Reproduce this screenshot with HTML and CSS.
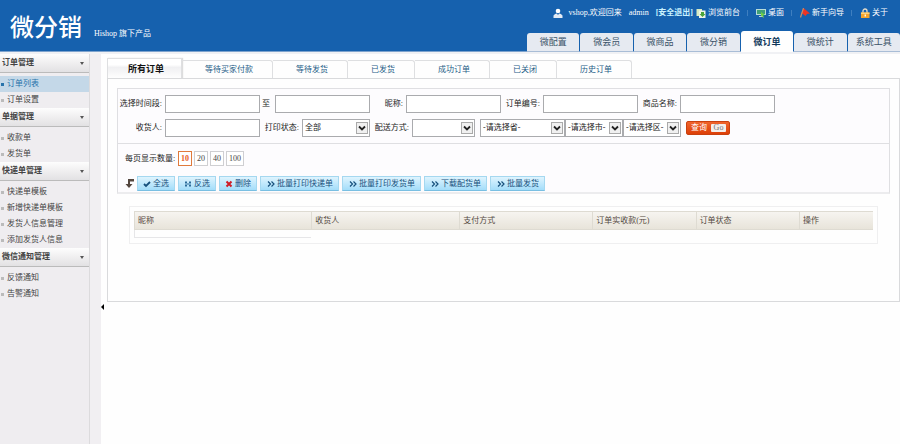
FILE: index.html
```html
<!DOCTYPE html>
<html lang="zh-CN">
<head>
    <meta charset="UTF-8">
    <meta name="viewport" content="width=device-width, initial-scale=1.0">
    <title>微分销</title>
    <link rel="stylesheet" href="styles.css">
</head>
<body>
    <header class="header">
        <div class="brand">
            <h1 class="logo">微分销</h1>
            <span class="slogan">Hishop 旗下产品</span>
        </div>
        <div class="header-right">
            <div class="toplinks">
                <svg class="icon user" viewBox="0 0 10 10"><circle cx="5" cy="3" r="2.3" fill="#fff"/><path d="M0.5 10V7.5Q2 5.8 3.8 5.6L5 7l1.2-1.4Q8 5.8 9.5 7.5V10z" fill="#e3ebf5"/></svg>
                <span class="welcome">vshop,欢迎回来</span>
                <span class="account">admin</span>
                <a class="logout" href="#">[安全退出]</a>
                <a href="#"><svg class="icon" viewBox="0 0 10 10"><path d="M0.5 1h5.5v7H0.5z" fill="#d8ecc4"/><path d="M3 2.5h6.5V10H3z" fill="#eef5e8"/><path d="M5 4h3v2h1.5L6.5 9 3.5 6H5z" fill="#4ba43a"/></svg>浏览前台</a>
                <i class="sep"></i>
                <a href="#"><svg class="icon" viewBox="0 0 10 10"><path d="M0 1h10v6H0z" fill="#b8dcd8"/><path d="M1 2h8v4H1z" fill="#3f9f78"/><path d="M3 8h4v1H3z" fill="#c4d2dc"/><path d="M5 4l4 3-2 .4 1 2-1 .4-1-2-1 1z" fill="#6fd044"/></svg>桌面</a>
                <i class="sep"></i>
                <a href="#"><svg class="icon" viewBox="0 0 10 10"><path d="M3.500 0L10 5.500 7 6 5.500 8 1.500 5z" fill="#ee3324"/><path d="M3.500 0L0.500 9.500" stroke="#c98d66" stroke-width="1.200"/></svg>新手向导</a>
                <i class="sep"></i>
                <a href="#"><svg class="icon" viewBox="0 0 10 10"><path d="M3 5V3a2 2 0 0 1 4 0v2" fill="none" stroke="#e4dccb" stroke-width="1.300"/><path d="M1 4.500h8.500V10H1z" fill="#f3a42c"/><path d="M1 4.500h8.500V6H1z" fill="#ffd176"/><path d="M4.600 6.500h1.300v2H4.600z" fill="#fff"/></svg>关于</a>
            </div>
            <nav class="mainnav">
                <a href="#">微配置</a>
                <a href="#">微会员</a>
                <a href="#">微商品</a>
                <a href="#">微分销</a>
                <a class="active" href="#">微订单</a>
                <a href="#">微统计</a>
                <a href="#">系统工具</a>
            </nav>
        </div>
    </header>

    <div class="page">
        <aside class="sidebar">
            <section>
                <h2>订单管理</h2>
                <ul>
                    <li class="current"><a href="#">订单列表</a></li>
                    <li><a href="#">订单设置</a></li>
                </ul>
            </section>
            <section>
                <h2>单据管理</h2>
                <ul>
                    <li><a href="#">收款单</a></li>
                    <li><a href="#">发货单</a></li>
                </ul>
            </section>
            <section>
                <h2>快递单管理</h2>
                <ul>
                    <li><a href="#">快递单模板</a></li>
                    <li><a href="#">新增快递单模板</a></li>
                    <li><a href="#">发货人信息管理</a></li>
                    <li><a href="#">添加发货人信息</a></li>
                </ul>
            </section>
            <section>
                <h2>微信通知管理</h2>
                <ul>
                    <li><a href="#">反馈通知</a></li>
                    <li><a href="#">告警通知</a></li>
                </ul>
            </section>
        </aside>
        <div class="gutter"></div>
        <div class="collapse">
            <button type="button" aria-label="收起菜单"></button>
        </div>

        <main class="content">
            <nav class="subtabs">
                <a class="active" href="#">所有订单</a>
                <a href="#">等待买家付款</a>
                <a href="#">等待发货</a>
                <a href="#">已发货</a>
                <a href="#">成功订单</a>
                <a href="#">已关闭</a>
                <a href="#">历史订单</a>
            </nav>
            <div class="panel">
                <form class="toolbox">
                    <div class="filters">
                        <div class="row">
                            <label class="first" for="start">选择时间段:</label>
                            <input id="start" type="text">
                            <label class="to" for="end">至</label>
                            <input id="end" type="text">
                            <label class="nick" for="nick">昵称:</label>
                            <input id="nick" type="text">
                            <label class="mid" for="order">订单编号:</label>
                            <input id="order" type="text">
                            <label class="mid" for="goods">商品名称:</label>
                            <input id="goods" type="text">
                        </div>
                        <div class="row">
                            <label class="first" for="receiver">收货人:</label>
                            <input id="receiver" type="text">
                            <label class="mid" for="print">打印状态:</label>
                            <select id="print" class="print"><option>全部</option></select>
                            <label class="mid" for="ship">配送方式:</label>
                            <select id="ship" class="ship"><option></option></select>
                            <div class="region">
                                <select class="province" aria-label="省"><option>-请选择省-</option></select>
                                <select class="city" aria-label="市"><option>-请选择市-</option></select>
                                <select class="city" aria-label="区"><option>-请选择区-</option></select>
                            </div>
                            <button class="search" type="button">查询<span>Go</span></button>
                        </div>
                    </div>
                    <div class="tools">
                        <div class="pagesize">
                            <span>每页显示数量:</span>
                            <a class="on" href="#">10</a>
                            <a href="#">20</a>
                            <a href="#">40</a>
                            <a href="#">100</a>
                        </div>
                        <div class="actions">
                            <svg class="turn" viewBox="0 0 9 9"><path d="M9 0v2.500H5V5h2.500L4 9 0.500 5H3V0z" fill="#54463f"/></svg>
                            <button type="button"><svg viewBox="0 0 8 8"><path d="M1 4l2 2 4-4" stroke="#17507c" stroke-width="1.800" fill="none"/></svg>全选</button>
                            <button type="button"><svg viewBox="0 0 8 8"><path d="M1 1.500h2v2h2v-2h2v2H5v1h2v2H5v-2H3v2H1v-2h2v-1H1z" fill="#2c6c9a"/></svg>反选</button>
                            <button type="button"><svg viewBox="0 0 8 8"><path d="M1.500 1.500l5 5m0-5l-5 5" stroke="#d01c26" stroke-width="2" fill="none"/></svg>删除</button>
                            <button class="wide" type="button"><svg viewBox="0 0 8 8"><path d="M1 1.500L3.500 4 1 6.500M4.500 1.500L7 4 4.500 6.500" stroke="#17507c" stroke-width="1.200" fill="none"/></svg>批量打印快递单</button>
                            <button class="wide" type="button"><svg viewBox="0 0 8 8"><path d="M1 1.500L3.500 4 1 6.500M4.500 1.500L7 4 4.500 6.500" stroke="#17507c" stroke-width="1.200" fill="none"/></svg>批量打印发货单</button>
                            <button class="wide" type="button"><svg viewBox="0 0 8 8"><path d="M1 1.500L3.500 4 1 6.500M4.500 1.500L7 4 4.500 6.500" stroke="#17507c" stroke-width="1.200" fill="none"/></svg>下载配货单</button>
                            <button class="wide" type="button"><svg viewBox="0 0 8 8"><path d="M1 1.500L3.500 4 1 6.500M4.500 1.500L7 4 4.500 6.500" stroke="#17507c" stroke-width="1.200" fill="none"/></svg>批量发货</button>
                        </div>
                    </div>
                </form>

                <div class="orders">
                    <table>
                        <thead>
                            <tr>
                                <th class="w24">昵称</th>
                                <th class="w20">收货人</th>
                                <th class="w18">支付方式</th>
                                <th class="w14">订单实收款(元)</th>
                                <th class="w14">订单状态</th>
                                <th>操作</th>
                            </tr>
                        </thead>
                        <tbody>
                            <tr>
                                <td></td>
                            </tr>
                        </tbody>
                    </table>
                </div>
            </div>
        </main>
    </div>
</body>
</html>
```
FILE: styles.css
```css
* {
    box-sizing: border-box;
}
body {
    margin: 0;
    min-height: 100vh;
    display: flex;
    flex-direction: column;
    background-color: #fefefe;
    color: #222;
    font-family: "Liberation Serif", "Noto Sans CJK SC", sans-serif;
    font-size: 8px;
    line-height: 12px;
}
a {
    color: inherit;
    text-decoration: none;
}
h1, h2, ul {
    margin: 0;
    padding: 0;
    list-style: none;
}
input, select, button {
    margin: 0;
    font: inherit;
    color: inherit;
}

/* header */
.header {
    display: flex;
    justify-content: space-between;
    height: 52px;
    background-color: #1661ae;
    border-bottom: 1px solid #7ea3cd;
    color: #fff;
}
.brand {
    display: flex;
    align-items: flex-end;
    gap: 12px;
    padding: 0 0 11px 10px;
}
.logo {
    font-size: 24px;
    line-height: 24px;
    font-weight: 500;
}
.header-right {
    display: flex;
    flex-direction: column;
    justify-content: space-between;
    align-items: flex-end;
    margin-bottom: -1px;
}
.toplinks {
    display: flex;
    align-items: center;
    padding: 7px 12px 0 0;
}
.toplinks a {
    display: flex;
    align-items: center;
    gap: 2px;
}
.icon {
    width: 10px;
    height: 10px;
}
.user {
    margin-right: 6px;
}
.account {
    margin: 0 7px;
}
.toplinks .logout {
    margin-right: 3px;
    color: #c9f2ff;
    font-weight: bold;
}
.sep {
    width: 1px;
    height: 6px;
    margin: 0 8px 0 7px;
    background-color: #3f7fc0;
}
.mainnav {
    display: grid;
    grid-template-columns: repeat(7, 1fr);
    align-items: end;
    gap: 1px;
    width: 373px;
}
.mainnav a {
    height: 19px;
    border-radius: 3px 3px 0 0;
    border-bottom: 1px solid #a9bdd6;
    background-color: #e6eaf1;
    color: #3a5268;
    font-size: 9px;
    line-height: 18px;
    text-align: center;
}
.mainnav .active {
    height: 21px;
    border-color: #fefefe;
    background-color: #fefefe;
    color: #123a5c;
    font-weight: bold;
    line-height: 22px;
}

/* left menu */
.page {
    display: flex;
    flex: 1;
    border-top: 2px solid #f0f1f4;
}
.sidebar {
    width: 90px;
    background-color: #efedf0;
    border-right: 1px solid #dcdbdd;
    color: #444;
}
.sidebar h2 {
    display: flex;
    justify-content: space-between;
    align-items: center;
    height: 19px;
    padding: 0 5px 0 2px;
    border-bottom: 1px solid #bbb;
    background: linear-gradient(#fdfdfd, #e2e1e3);
    font-size: 8px;
    font-weight: bold;
}
.sidebar h2::after {
    content: "";
    border: 2px solid transparent;
    border-top: 3px solid #555;
    border-bottom: 0;
}
.sidebar ul {
    padding-top: 3px;
}
.sidebar li {
    display: flex;
    align-items: center;
    gap: 3px;
    height: 16px;
    padding-left: 1px;
}
.sidebar li::before {
    content: "";
    width: 3px;
    height: 3px;
    background-color: #bbb;
}
.sidebar .current {
    background-color: #c4d8e8;
    color: #2873ab;
}
.sidebar .current::before {
    background-color: #2873ab;
}
.gutter {
    width: 11px;
    background-color: #f1eff2;
}
.collapse {
    width: 6px;
    padding-top: 250px;
}
.collapse button {
    display: block;
    width: 0;
    height: 0;
    padding: 0;
    border: 3px solid transparent;
    border-right-color: #000;
    border-left: 0;
    background: none;
}

/* content */
.content {
    flex: 1;
    padding-top: 4px;
}
.subtabs {
    display: flex;
    align-items: flex-end;
    color: #1d5c86;
}
.subtabs a {
    height: 18px;
    padding: 0 19px 0 23px;
    border: solid #dedfe1;
    border-width: 1px 1px 0 0;
    border-radius: 0 3px 0 0;
    line-height: 17px;
}
.subtabs .active {
    height: 20px;
    padding: 0 17px 0 20px;
    border-width: 1px 1px 0 1px;
    border-radius: 0;
    background: linear-gradient(#fff, #fff 30%, #f0f0f2 45%, #fefefe);
    box-shadow: 1px 0 1px #ddd;
    color: #111;
    font-size: 9px;
    font-weight: bold;
    line-height: 20px;
}
.panel {
    height: 224px;
    padding: 9px 9px 0 9px;
    border: 1px solid #d9dadc;
}
.toolbox {
    border: 1px solid #dfdfe2;
    border-bottom: 2px solid #ececee;
    background-color: #fdfcfe;
}
.filters {
    display: flex;
    flex-direction: column;
    gap: 6px;
    padding: 6px 0;
}
.row {
    display: flex;
    align-items: center;
}
.row label {
    padding-right: 3px;
    text-align: right;
    white-space: nowrap;
}
.row .first {
    width: 47px;
}
.row .to {
    width: 15px;
    text-align: center;
}
.row .nick {
    width: 36px;
}
.row .mid {
    width: 42px;
}
.row input {
    width: 95px;
    height: 18px;
    padding: 0 2px;
    border: 1px solid #aaabae;
    background-color: #fff;
}
.row select {
    height: 18px;
    padding: 0 0 0 2px;
    border: 1px solid #aaabae;
    border-radius: 0;
    appearance: none;
    background: #fff url("data:image/svg+xml,%3Csvg xmlns='http://www.w3.org/2000/svg' width='12' height='12'%3E%3Crect x='.5' y='.5' width='11' height='11' fill='%23f0f0f0' stroke='%23aaa'/%3E%3Cpath d='M3 4.500l3 3 3-3' fill='none' stroke='%23222' stroke-width='1.800'/%3E%3C/svg%3E") no-repeat right 1px center;
}
.row .print {
    width: 68px;
}
.row .ship {
    width: 63px;
}
.region {
    display: flex;
    margin: 0 5px;
}
.region .province {
    width: 85px;
}
.region .city {
    width: 58px;
}
.search {
    display: flex;
    align-items: center;
    gap: 4px;
    height: 14px;
    padding: 0 3px 0 4px;
    border: 1px solid #c9400f;
    border-radius: 2px;
    background: linear-gradient(#f0642c, #dd3f08);
    color: #fff;
}
.search span {
    width: 15px;
    border-radius: 1px;
    background-color: #f3eeea;
    color: #777;
    line-height: 8px;
}
.tools {
    padding: 7px 7px 1px 7px;
    border-top: 1px solid #dfdfe2;
}
.pagesize {
    display: flex;
    align-items: center;
    gap: 2px;
}
.pagesize span {
    width: 51px;
}
.pagesize a {
    height: 15px;
    padding: 0 2px;
    border: 1px solid #cfcfd2;
    background-color: #fff;
    color: #444;
    line-height: 13px;
}
.pagesize .on {
    border-color: #e07a3c;
    color: #e8601c;
    font-weight: bold;
}
.actions {
    display: flex;
    align-items: center;
    gap: 3px;
    margin-top: 10px;
}
.actions svg {
    width: 8px;
    height: 8px;
}
.actions .turn {
    width: 9px;
    height: 9px;
}
.actions button {
    display: flex;
    align-items: center;
    gap: 2px;
    height: 15px;
    padding: 0 5px;
    border: 1px solid #a5d8f0;
    border-bottom-color: #79bfe2;
    background: linear-gradient(#dff4fe, #a3ddfa);
    color: #17507c;
    white-space: nowrap;
}
.actions .wide {
    padding: 0 5px 0 6px;
}

/* order list */
.orders {
    margin: 12px 12px 0 12px;
    padding: 4px 4px 5px 4px;
    border: 1px solid #efeff0;
}
.orders table {
    width: 100%;
    border-collapse: separate;
    border-spacing: 0;
    table-layout: fixed;
}
.orders th {
    height: 19px;
    padding: 0 3px;
    border: solid #dedbd2;
    border-width: 1px 0 1px 1px;
    background: linear-gradient(#f6f4f0, #e8e4da);
    color: #54493f;
    font-weight: normal;
    text-align: left;
    white-space: nowrap;
}
.orders td {
    height: 8px;
    padding: 0;
    border: solid #e6e6e8;
    border-width: 0 0 1px 1px;
}
.w24 {
    width: 24%;
}
.w20 {
    width: 20%;
}
.w18 {
    width: 18%;
}
.w14 {
    width: 14%;
}
```
